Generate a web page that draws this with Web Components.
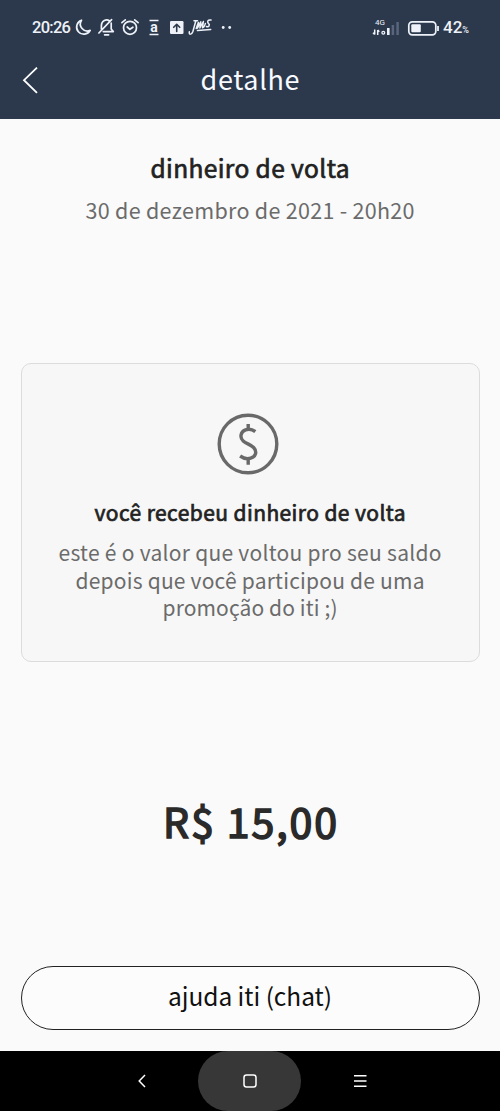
<!DOCTYPE html>
<html lang="pt-BR">
<head>
<meta charset="utf-8">
<title>detalhe</title>
<style>
html,body{margin:0;padding:0}
body{width:500px;height:1111px;overflow:hidden;background:#fafafa;font-family:"Noto Sans CJK SC","Noto Sans",sans-serif}
</style>
</head>
<body>
<iti-screen></iti-screen>
<script>
const define = (name, html, init) => {
  const t = document.createElement('template');
  t.innerHTML = html;
  customElements.define(name, class extends HTMLElement {
    constructor() {
      super();
      this.attachShadow({mode: 'open'}).append(t.content.cloneNode(true));
    }
    connectedCallback() { if (init) init(this); }
  });
};

/* One centred line of text, tracked to the width given in its "fit" attribute. */
define('text-line', `<style>
:host{display:block;text-align:center;white-space:nowrap}
span{display:inline-block}
</style><span><slot></slot></span>`, el => {
  const s = el.shadowRoot.querySelector('span');
  const slot = el.shadowRoot.querySelector('slot');
  const track = () => {
    const text = slot.assignedNodes({flatten: true}).map(x => x.textContent).join('').trim();
    if (text.length < 2) return;
    s.style.letterSpacing = '0px';
    s.style.marginRight = '0px';
    const gap = (Number(el.getAttribute('fit')) - s.getBoundingClientRect().width) / (text.length - 1);
    s.style.letterSpacing = gap + 'px';
    s.style.marginRight = -gap + 'px';
  };
  slot.addEventListener('slotchange', track);
  track();
});

define('status-bar', `<style>
:host{display:flex;align-items:center;height:55px;box-sizing:border-box;padding:0 30px 0 32px;background:#2c394d;color:#eef2f8;font-family:Roboto,sans-serif}
text-line{font-size:16.5px;line-height:20px;font-weight:500;width:39px}
svg{display:block;flex:none}
.icons{margin-left:3px}
.right{margin-left:auto;display:flex;align-items:center}
.net{width:28px;display:grid;grid-template-rows:8px 10px;margin-right:7px}
.net b{font-weight:400;font-size:8px;line-height:8px;padding-left:3px}
.net svg{margin-top:-6px}
.pct{font-size:17px;line-height:20px;font-weight:500;width:28px;white-space:nowrap;margin-left:4px;margin-right:-1px;padding-top:2px}
.pct small{font-size:9px}
</style>
<text-line fit="39">20:26</text-line>
<svg class="icons" width="162" height="24" viewBox="74 16 162 24" fill="none" stroke="#eef2f8" stroke-width="1.7" stroke-linecap="round" stroke-linejoin="round">
 <path d="M81.5 20.2A7.2 7.2 0 1 0 90.2 30.4A7 7 0 0 1 81.5 20.2Z"/>
 <path d="M103.3 31.6H113.3L111.2 29V23.2M101.4 29V25.2C101.6 20.6 106.4 18.4 109.6 21M98.9 33L111.6 19.6M104.6 34.8H108.6"/>
 <circle cx="130" cy="27.8" r="6.5"/><path d="M127.2 27l2.7 2.3 3-2.1M121.9 22.6l3.4-2.8M138.1 22.6l-3.4-2.8"/>
 <path d="M149.5 20.5h9M149.5 34.5h9" stroke-width="1.5" stroke-linecap="butt"/>
 <rect x="170" y="21" width="13.5" height="13" rx="1.2" fill="#eef2f8" stroke="none"/>
 <path d="M176.7 31.5v-6.8M173.7 27.3l3-3 3 3" stroke="#2c394d" stroke-width="1.6"/>
 <text x="154" y="32" font-family="Roboto,sans-serif" font-size="14" font-weight="700" text-anchor="middle" fill="#eef2f8" stroke="none">a</text>
 <path d="M189.3 31.8c-.6 3 2.4 3.2 3.5 0l3-10.8M194 20.8h3.5M196.2 28.5l2.2-6-1 5.7 3.4-6.4-.9 6.2 3.5-6.5-.9 6.2c1 .3 2.2-2 2.9-4.3M211 20c-3.4-.6-4 2-2.6 3.4 2 1.6.4 4.2-2 3.1M197.5 30.6l13.2-1" stroke-width="1.5"/>
 <circle cx="223.2" cy="27.5" r="1.4" fill="#eef2f8" stroke="none"/><circle cx="229.7" cy="27.5" r="1.4" fill="#eef2f8" stroke="none"/>
</svg>
<div class="right">
 <div class="net"><b>4G</b>
 <svg width="28" height="15" viewBox="373 20 28 15" fill="none" stroke="#eef2f8">
  <path d="M375.7 28.5v5M374 31.7l1.7 1.8M378.7 34v-5M380.3 30.7l-1.6-1.7" stroke-width="1.5"/>
  <circle cx="384.3" cy="31.7" r="1.4" stroke-width="1.3"/>
  <path d="M389.3 27v7" stroke-width="2.6"/><path d="M393.9 24v10M398.6 21v13" stroke="#59657a" stroke-width="2.5"/>
 </svg></div>
 <svg width="32" height="16" viewBox="407 19 32 16"><rect x="408.8" y="20.8" width="27" height="13" rx="3.5" fill="none" stroke="#eef2f8" stroke-width="1.7"/><rect x="411.3" y="23.3" width="9.5" height="8" rx="1" fill="#eef2f8"/><path d="M438 25v5" stroke="#eef2f8" stroke-width="1.8"/></svg>
 <div class="pct">42<small>%</small></div>
</div>`);

define('title-bar', `<style>
:host{display:grid;grid-template-columns:60px 380px 60px;height:64px;box-sizing:border-box;padding-bottom:16px;background:#2c394d;color:#f8faff;font-size:27px;line-height:47px}
svg{display:block;margin:11px 0 0 20px}
</style>
<svg width="20" height="28" viewBox="20 66 20 28" fill="none" stroke="#fff" stroke-width="1.8"><path d="M37 67.6L24 80.2L37 92.8"/></svg>
<text-line fit="99"><slot></slot></text-line>`);

define('info-card', `<style>
:host{display:block;box-sizing:border-box;width:459px;height:299px;border:1.5px solid #dcdcdc;border-radius:10px;background:#f7f7f7;padding-top:49px}
svg{display:block;margin:0 auto 22px;position:relative;left:-2px}
</style>
<svg width="62" height="62" viewBox="217 413 62 62" fill="none" stroke="#696969" stroke-width="3.4">
<circle cx="248" cy="444" r="28.8"/>
<path d="M255.3 431.6C252.5 429.3 248.8 428.7 245.5 429.8C240.2 431.9 239.7 437.8 243.2 441C246 443.5 250.5 444.5 253.6 447.5C257.3 451.5 256 456.5 250.7 458.2C247.2 459.3 243.3 458.3 240.1 456M248.2 424V430M248.2 458.5V464.8"/>
</svg><slot></slot>`);

define('pill-button', `<style>
:host{display:block;box-sizing:border-box;width:459px;height:64px}
button{display:block;width:100%;height:100%;border:1.5px solid #222;border-radius:33px;background:#fcfcfc;color:#111;font:inherit;font-size:24.5px;line-height:30px;padding:0 0 5px;margin:0}
</style><button><text-line fit="164"><slot></slot></text-line></button>`);

define('nav-bar', `<style>
:host{display:flex;justify-content:center;height:60px;background:#000;padding-right:2px}
div{width:109px;height:60px;display:grid;place-items:center}
.home{width:103px;background:#373737;border-radius:32px}
svg{display:block}
</style>
<div><svg width="20" height="20" viewBox="0 0 20 20" fill="none" stroke="#fff" stroke-width="1.5" style="margin-left:-2px"><path d="M13 4L7.2 10L13 16"/></svg></div>
<div class="home"><svg width="20" height="20" viewBox="0 0 20 20" fill="none" stroke="#fff" stroke-width="1.5" style="margin-left:2px"><rect x="4" y="4" width="12" height="12" rx="2.5"/></svg></div>
<div><svg width="20" height="20" viewBox="0 0 20 20" stroke="#fff" stroke-width="1.5" style="margin-left:9px"><path d="M4 4.8h12.5M4 10h12.5M4 15.2h12.5"/></svg></div>`);

define('iti-screen', `<style>
:host{display:flex;flex-direction:column;width:500px;height:1111px;background:#fafafa}
main{flex:1;display:flex;flex-direction:column;align-items:center}
.t{margin-top:33px;font-size:24.5px;line-height:31px;-webkit-text-stroke:.7px #222;color:#222}
.d{margin-top:11px;font-size:21.5px;line-height:31px;color:#6b6b6b}
info-card{margin-top:138px}
.h{font-size:21px;line-height:30px;-webkit-text-stroke:.7px #222;color:#222;margin-bottom:12px}
.p{font-size:21px;line-height:27.5px;color:#6b6b6b}
.v{margin-top:128px;font-size:41px;line-height:60px;-webkit-text-stroke:1.6px #2a2a2a;color:#2a2a2a}
pill-button{margin-top:116px}
</style>
<status-bar></status-bar>
<title-bar>detalhe</title-bar>
<main>
<text-line class="t" fit="199">dinheiro de volta</text-line>
<text-line class="d" fit="329">30 de dezembro de 2021 - 20h20</text-line>
<info-card>
<text-line class="h" fit="311">você recebeu dinheiro de volta</text-line>
<text-line class="p" fit="383">este é o valor que voltou pro seu saldo</text-line>
<text-line class="p" fit="349">depois que você participou de uma</text-line>
<text-line class="p" fit="175">promoção do iti ;)</text-line>
</info-card>
<text-line class="v" fit="174">R$ 15,00</text-line>
<pill-button>ajuda iti (chat)</pill-button>
</main>
<nav-bar></nav-bar>`);
</script>
</body>
</html>
